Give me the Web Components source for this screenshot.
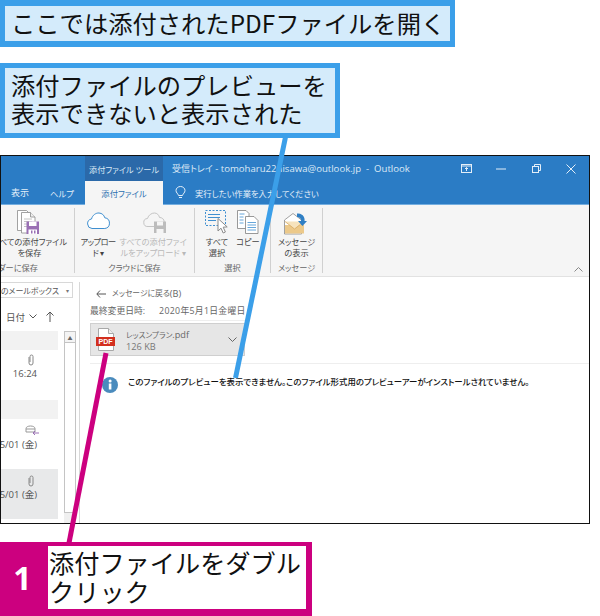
<!DOCTYPE html>
<html lang="ja">
<head>
<meta charset="utf-8">
<title>添付ファイル</title>
<style>
  html, body { margin: 0; padding: 0; background: #fff; }
  body { width: 600px; height: 616px; overflow: hidden; position: relative; font-family: "Noto Sans CJK JP", "Noto Sans", sans-serif; }
</style>
</head>
<body>
<how-to-page></how-to-page>

<script>
const FONT = '"Noto Sans CJK JP", "Noto Sans", sans-serif';
const UI_FONT = '"Open Sans", "Noto Sans CJK JP", sans-serif';

function define(name, css, html) {
  customElements.define(name, class extends HTMLElement {
    constructor() {
      super();
      this.attachShadow({ mode: 'open' });
      this.shadowRoot.innerHTML = `<style>${css}</style>${html}`;
    }
  });
}

define('call-out', `
  :host {
    display: block;
    width: fit-content;
    box-sizing: border-box;
    border: 5px solid #3b9fe9;
    background: #d4ebfb;
    padding: 0 6px;
    color: #111;
    font: 24.3px/28px ${FONT};
    white-space: nowrap;
  }
`, `<slot></slot>`);

define('step-box', `
  :host {
    display: flex;
    width: 312px;
    height: 74px;
    box-sizing: border-box;
    background: #cc007f;
    padding: 4px 6px 7px 0;
    font-family: ${FONT};
  }
  b {
    width: 45px;
    padding-right: 3px;
    flex: none;
    color: #fff;
    font: 700 32px/63px "Noto Sans", sans-serif;
    text-align: center;
  }
  div {
    flex: 1;
    background: #fff;
    color: #111;
    padding: 2px 0 0 1px;
    font-size: 25.2px;
    line-height: 29px;
    white-space: nowrap;
  }
`, `<b><slot name="num"></slot></b><div><slot></slot></div>`);

define('title-bar', `
  :host {
    display: flex;
    height: 25px;
    align-items: center;
    background: #2b7cc5;
    color: #dbe9f6;
    font: 9px ${UI_FONT};
    font-feature-settings: "palt";
    white-space: pre;
  }
  .ctx {
    width: 78px;
    margin-left: 84px;
    align-self: stretch;
    background: #2b69a9;
    display: flex;
    align-items: center;
    justify-content: center;
    flex: none;
    font-size: 8.2px;
  }
  .cap { margin-left: 9px; flex: 1; }
  .cap span { font-size: 9.6px; }
  svg { flex: none; display: block; }
  .btns { display: flex; align-items: center; }
`, `
  <div class="ctx">添付ファイル ツール</div>
  <div class="cap">受信トレイ <span>- tomoharu22nisawa@outlook.jp  -  Outlook</span></div>
  <div class="btns">
    <svg width="11" height="9" viewBox="0 0 11 9" fill="none" stroke="#e3eef8"><rect x=".5" y=".5" width="10" height="8"/><path d="M1 2h9M5.500 7V3.500M4 5l1.500-1.500L7 5"/></svg>
    <svg style="margin-left:24px" width="10" height="2" viewBox="0 0 10 2" stroke="#e3eef8"><path d="M0 1h10"/></svg>
    <svg style="margin-left:26px" width="9" height="9" viewBox="0 0 9 9" fill="none" stroke="#e3eef8"><rect x=".5" y="2.500" width="6" height="6"/><path d="M2.500 2.500v-2h6v6h-2"/></svg>
    <svg style="margin-left:25px;margin-right:13px" width="10" height="10" viewBox="0 0 10 10" stroke="#e3eef8"><path d="M.5.500l9 9M9.500.500l-9 9"/></svg>
  </div>
`);

define('tab-row', `
  :host {
    display: flex;
    height: 23px;
    align-items: center;
    background: #2b7cc5;
    border-bottom: 1px solid #74aee0;
    box-sizing: content-box;
    color: #e4eff9;
    font: 8.3px ${FONT};
    font-feature-settings: "palt";
    white-space: nowrap;
  }
  .a { margin-left: 10px; width: 39px; font-size: 9px; }
  .b { width: 35px; }
  .on {
    width: 78px;
    align-self: stretch;
    margin-bottom: -1px;
    background: #f5f5f5;
    color: #2b6fb0;
    display: flex;
    align-items: center;
    justify-content: center;
  }
  svg { margin: 0 9px 0 12px; display: block; }
`, `
  <span class="a">表示</span><span class="b">ヘルプ</span>
  <span class="on">添付ファイル</span>
  <svg width="11" height="13" viewBox="0 0 11 13" fill="none" stroke="#e4eff9"><path d="M3.500 9.500C3 7.500 1 6.800 1 4.500a4.500 4 0 0 1 9 0c0 2.300-2 3-2.500 5zM4 11.500h3"/></svg>
  <span>実行したい作業を入力してください</span>
`);

define('rb-group', `
  :host {
    display: flex;
    flex-direction: column;
    flex: none;
    box-sizing: border-box;
    position: relative;
    overflow: hidden;
    margin: 3px 0;
    border-right: 1px solid #d0d0d0;
    color: #444;
    font: 8.2px/11px ${FONT};
    font-feature-settings: "palt";
    white-space: nowrap;
  }
  .items { display: flex; flex: 1; justify-content: var(--rb-justify, center); padding-right: var(--rb-pad, 0); }
  .label { height: 11px; padding-right: var(--rb-label-pad, 0); color: #666; display: flex; justify-content: var(--rb-justify, center); }
`, `<div class="items"><slot></slot></div><div class="label"><slot name="label"></slot></div>`);

define('rb-btn', `
  :host {
    display: flex;
    flex-direction: column;
    align-items: center;
    flex: none;
    padding-top: 2px;
    text-align: center;
  }
  .ic { height: 26px; display: flex; align-items: flex-start; }
  :host([off]) { color: #b8b8b8; }
`, `<div class="ic"><slot name="icon"></slot></div><slot></slot>`);

define('ribbon-bar', `
  :host {
    display: flex;
    height: 71px;
    background: #f5f5f5;
    border-bottom: 1px solid #e2e2e2;
    position: relative;
  }
  .up { position: absolute; right: 6px; bottom: 4px; }
  svg { display: block; }
`, `
  <rb-group style="width:74px;--rb-justify:flex-end;--rb-pad:7px;--rb-label-pad:36px">
    <rb-btn>
      <svg slot="icon" width="24" height="25" viewBox="0 0 24 25" fill="#fff" stroke="#8c8c8c" stroke-width=".8" style="margin-right:2px">
        <path d="M1.500.5h9l2 2v18h-11z"/>
        <path d="M5.500 2.500h9l4.500 4.500v16h-13.500z"/>
        <path d="M14.500 2.500V7H19" fill="#eee"/>
        <path d="M8 9h8M8 11.500h8M8 14h5M8 16.500h3" stroke="#b5b5b5"/>
        <path d="M10.500 11.500H23v12.500H10.500z" fill="#9a70b4" stroke="none"/>
        <path d="M13 11.500h7.500v4.500H13zM12.500 19.500h8.500v4.500h-8.500z" fill="#fff" stroke="none"/>
        <path d="M15 20.500h1.500v3H15zM18 20.500h1.500v3H18z" fill="#9a70b4" stroke="none"/>
      </svg>
      <span>すべての添付ファイル<br>を保存</span>
    </rb-btn>
    <span slot="label">フォルダーに保存</span>
  </rb-group>
  <rb-group style="width:120px">
    <rb-btn style="width:40px">
      <svg slot="icon" width="25" height="18" viewBox="0 0 25 18" fill="#fff" stroke="#3f8fd0" style="margin-top:2px"><path d="M6 16.500a4.800 4.800 0 0 1-.5-9.500C6.500 3 10 .8 13 1c3 .2 5 2 5.800 4.800a5.400 5.400 0 0 1 0 10.700z"/></svg>
      <span style="letter-spacing:-.5px">アップロー<br>ド ▾</span>
    </rb-btn>
    <rb-btn off style="width:70px;margin-right:3px">
      <svg slot="icon" width="25" height="24" viewBox="0 0 25 24" fill="#f5f5f5" stroke="#c4c4c4" style="margin:2px 0 0 4px"><path d="M5 14.500a4 4 0 0 1-.5-8C5.500 3 8.500 1 11.500 1c2.500 0 4.500 2 5 4.500a4.500 4.500 0 0 1 .5 9z"/><path d="M11 9.500h12V21H11z" fill="#bcbcbc" stroke="none"/><path d="M14 9.500h6v4h-6zM13.500 17h7v4h-7z" fill="#f5f5f5" stroke="none"/></svg>
      <span>すべての添付ファイ<br>ルをアップロード ▾</span>
    </rb-btn>
    <span slot="label">クラウドに保存</span>
  </rb-group>
  <rb-group style="width:76px">
    <rb-btn style="width:31px">
      <svg slot="icon" width="24" height="24" viewBox="0 0 24 24" fill="none">
        <rect x=".5" y=".5" width="20" height="15" stroke="#3f8fd0" stroke-dasharray="2 1.500"/>
        <path d="M3 4.500h12M3 7.500h12M3 10.500h8" stroke="#3f8fd0"/>
        <path d="M13 8.500v12.500l3-2.800 2.200 4.800 2.200-1-2.200-4.800 4-.3z" fill="#fff" stroke="#8a8a8a"/>
      </svg>
      <span>すべて<br>選択</span>
    </rb-btn>
    <rb-btn style="width:31px">
      <svg slot="icon" width="22" height="24" viewBox="0 0 22 24" fill="#fff" stroke="#808080" stroke-width=".8">
        <path d="M.5.500h8.500l3 3v15h-11.500z"/>
        <path d="M8.500 6.500h8.500l4 4v13h-12.500z"/>
        <path d="M2.500 4h5M2.500 7h4M2.500 10h4M2.500 13h4M10.500 12.500h8.500M10.500 15h8.500M10.500 17.500h8.500M10.500 20h8.500" stroke="#3f8fd0"/>
      </svg>
      <span>コピー</span>
    </rb-btn>
    <span slot="label">選択</span>
  </rb-group>
  <rb-group style="width:52px">
    <rb-btn>
      <svg slot="icon" width="24" height="23" viewBox="0 0 24 23" fill="#fff" stroke="#8a8a8a" stroke-width=".8" style="margin-top:2px">
        <path d="M.5 8L9 1.500 17.500 8v14H.5z"/>
        <path d="M1 13h19v8.500H1z" fill="#ecc98a" stroke="none"/>
        <path d="M1 9.500l9.500 7.500 9.500-7.500" fill="#f6e3bd" stroke="#d6a860"/>
        <path d="M13 1.500a6.500 6.500 0 0 1 7.500 7.500H23l-4.500 5L14 9h3c.2-2.500-1.500-4-4-4z" fill="#2f7fc4" stroke="none"/>
      </svg>
      <span>メッセージ<br>の表示</span>
    </rb-btn>
    <span slot="label">メッセージ</span>
  </rb-group>
  <svg class="up" width="9" height="5" viewBox="0 0 9 5" fill="none" stroke="#888"><path d="M.5 4.500l4-4 4 4"/></svg>
`);

define('mail-item', `
  :host {
    display: flex;
    flex-direction: column;
    align-items: flex-end;
    height: 50px;
    box-sizing: border-box;
    padding: 4px 21px 0 0;
    color: #555;
    font: 9.500px/14px ${UI_FONT};
    white-space: nowrap;
  }
  :host([sel]) { background: #e8e9ea; }
  :host([low]) { padding-top: 6px; }
  .ic { height: 13px; width: 100%; display: flex; justify-content: flex-end; padding-right: 3px; box-sizing: border-box; }
`, `<div class="ic"><slot name="icon"></slot></div><slot></slot>`);

define('mail-list', `
  :host {
    display: flex;
    flex-direction: column;
    width: 79px;
    flex: none;
    box-sizing: border-box;
    border-right: 1px solid #d8d8d8;
    margin-top: 5px;
    color: #555;
    font: 8px ${FONT};
    font-feature-settings: "palt";
    white-space: nowrap;
    overflow: hidden;
  }
  .box {
    height: 16px;
    width: 72px;
    box-sizing: border-box;
    border: 1px solid #d8d8d8;
    border-left: 0;
    display: flex;
    align-items: center;
    justify-content: flex-end;
    padding-right: 3px;
    gap: 7px;
  }
  .box i { font-style: normal; font-size: 6px; color: #777; }
  .sort { height: 33px; box-sizing: border-box; padding: 4px 0 0 5px; display: flex; align-items: center; font-size: 9.500px; }
  .sort svg { margin-left: 4px; }
  .cols { display: flex; flex: 1; min-height: 0; }
  .items { width: 57px; flex: none; display: flex; flex-direction: column; }
  .sec { height: 19px; background: #f2f2f2; flex: none; }
  .sbar {
    width: 12px;
    margin-left: 6px;
    flex: none;
    display: flex;
    flex-direction: column;
    box-sizing: border-box;
    background: #f0f0f0;
    color: #666;
  }
  .sbar .up { height: 10px; border: 1px solid #c4c4c4; background: #f4f4f4; display: flex; align-items: center; justify-content: center; font-size: 5px; }
  .sbar .th { height: 170px; border: 1px solid #c4c4c4; border-top: 0; background: #fff; box-sizing: border-box; }
`, `
  <div class="box"><span>在のメールボックス</span><i>▾</i></div>
  <div class="sort">日付
    <svg width="8" height="5" viewBox="0 0 8 5" fill="none" stroke="#555"><path d="M.5.500L4 4 7.500.500"/></svg>
    <svg style="margin-left:9px" width="8" height="11" viewBox="0 0 8 11" fill="none" stroke="#555"><path d="M4 11V1M.5 4.500L4 1l3.500 3.500"/></svg>
  </div>
  <div class="cols">
    <div class="items">
      <div class="sec"></div>
      <mail-item>
        <svg slot="icon" width="6" height="12" viewBox="0 0 6 12" fill="none" stroke="#888"><path d="M1 3v6a2 2 0 0 0 4 0V2.500a1.500 1.500 0 0 0-3 0V8"/></svg>
        16:24
      </mail-item>
      <div class="sec"></div>
      <mail-item low>
        <svg slot="icon" width="14" height="12" viewBox="0 0 14 12" fill="none" stroke="#999" style="margin-right:-5px"><path d="M1 7V3.500C1 2 3 1 5.500 1S10 2 10 3.500V7H1zM1 4h9"/><path d="M14 8H8M10 6l-2 2 2 2" stroke="#9a70b4"/></svg>
        5/01 (金)
      </mail-item>
      <mail-item sel low>
        <svg slot="icon" width="6" height="12" viewBox="0 0 6 12" fill="none" stroke="#888"><path d="M1 3v6a2 2 0 0 0 4 0V2.500a1.500 1.500 0 0 0-3 0V8"/></svg>
        5/01 (金)
      </mail-item>
    </div>
    <div class="sbar"><div class="up">▲</div><div class="th"></div></div>
  </div>
`);

define('attach-chip', `
  :host {
    display: flex;
    align-items: center;
    width: 155px;
    height: 33px;
    box-sizing: border-box;
    background: #e6e6e6;
    border: 1px solid #cfcfcf;
    color: #666;
    font: 7.6px/11px ${UI_FONT};
    font-feature-settings: "palt";
    white-space: nowrap;
  }
  svg { display: block; flex: none; }
  .t { margin-left: 10px; flex: 1; }
  .t div:first-child { margin-top: 1px; }
  .t span { font-size: 9.200px; }
  .t div:last-child { color: #777; font-size: 9.200px; }
`, `
  <svg style="margin-left:5px" width="20" height="24" viewBox="0 0 20 24">
    <path d="M2.500.5h10l5 5v17h-15z" fill="#fff" stroke="#a8a8a8"/>
    <path d="M12.500.5v5h5" fill="#eee" stroke="#a8a8a8"/>
    <rect x="0" y="9" width="19" height="9" fill="#d32f1e"/>
    <text x="9.500" y="16" text-anchor="middle" font-family="Liberation Sans" font-weight="700" font-size="7" fill="#fff">PDF</text>
  </svg>
  <div class="t"><div>レッスンプラン<span>.pdf</span></div><div>126 KB</div></div>
  <svg style="margin-right:7px" width="9" height="6" viewBox="0 0 9 6" fill="none" stroke="#666"><path d="M.5.500l4 4 4-4"/></svg>
`);

define('read-pane', `
  :host {
    display: block;
    flex: 1;
    min-width: 0;
    padding: 10px 0 0 10px;
    color: #666;
    font: 8.800px/13px ${UI_FONT};
    font-feature-settings: "palt";
    white-space: nowrap;
  }
  .back { display: flex; align-items: center; padding-left: 6px; height: 13px; font-size: 7.800px; }
  .back svg { margin-right: 6px; }
  .back span { font-size: 9.200px; }
  .date { margin-top: 5px; height: 13px; display: flex; }
  .date span { margin-left: 14px; letter-spacing: .3px; }
  .rule1 { margin-top: 2px; height: 1px; background: #eee; width: 155px; }
  attach-chip { margin-top: 2px; }
  .rule2 { margin-top: 7px; height: 1px; background: #eee; margin-right: 0; }
  .msg { display: flex; align-items: center; margin: 11px 0 0 11px; color: #111; font-size: 8.420px; font-weight: 500; }
  .msg svg { flex: none; margin-right: 9px; }
  .msg span { padding-bottom: 6px; }
`, `
  <div class="back">
    <svg width="10" height="8" viewBox="0 0 10 8" fill="none" stroke="#555"><path d="M10 4H1M4 .5L.8 4 4 7.500"/></svg>
    メッセージに戻る<span>(B)</span>
  </div>
  <div class="date">最終変更日時:<span>2020年5月1日金曜日</span></div>
  <div class="rule1"></div>
  <attach-chip></attach-chip>
  <div class="rule2"></div>
  <div class="msg">
    <svg width="18" height="18" viewBox="0 0 18 18"><circle cx="9" cy="9" r="8" fill="#4a8bbd"/><rect x="7.800" y="7.500" width="2.600" height="6" fill="#fff"/><circle cx="9.100" cy="5" r="1.500" fill="#fff"/></svg>
    <span>このファイルのプレビューを表示できません。このファイル形式用のプレビューアーがインストールされていません。</span>
  </div>
`);

define('outlook-window', `
  :host {
    display: flex;
    flex-direction: column;
    width: 590px;
    height: 369px;
    box-sizing: border-box;
    border: 1px solid #111;
    background: #fff;
    overflow: hidden;
  }
  .body { display: flex; flex: 1; min-height: 0; }
`, `
  <title-bar></title-bar>
  <tab-row></tab-row>
  <ribbon-bar></ribbon-bar>
  <div class="body"><mail-list></mail-list><read-pane></read-pane></div>
`);

define('lead-lines', `
  :host { position: absolute; left: 0; top: 0; width: 600px; height: 616px; pointer-events: none; }
  svg { display: block; }
`, `
  <svg width="600" height="616" viewBox="0 0 600 616" fill="none" stroke-width="5">
    <path d="M285.500 137L235.500 378" stroke="#3b9fe9"/>
    <path d="M106 353L69 543" stroke="#cc007f"/>
  </svg>
`);

define('how-to-page', `
  :host { display: flex; flex-direction: column; align-items: flex-start; width: 600px; height: 616px; position: relative; }
  .c1 { height: 47px; border-top-width: 6px; border-bottom-width: 6px; line-height: 34px; width: 455px; }
  .c2 { height: 75px; margin-top: 16px; width: 340px; padding-top: 3px; box-sizing: border-box; }
  outlook-window { margin-top: 17px; }
  step-box { margin-top: 18px; }
`, `
  <call-out class="c1">ここでは添付されたPDFファイルを開く</call-out>
  <call-out class="c2">添付ファイルのプレビューを<br>表示できないと表示された</call-out>
  <outlook-window></outlook-window>
  <step-box><span slot="num">1</span>添付ファイルをダブル<br>クリック</step-box>
  <lead-lines></lead-lines>
`);
</script>
</body>
</html>
